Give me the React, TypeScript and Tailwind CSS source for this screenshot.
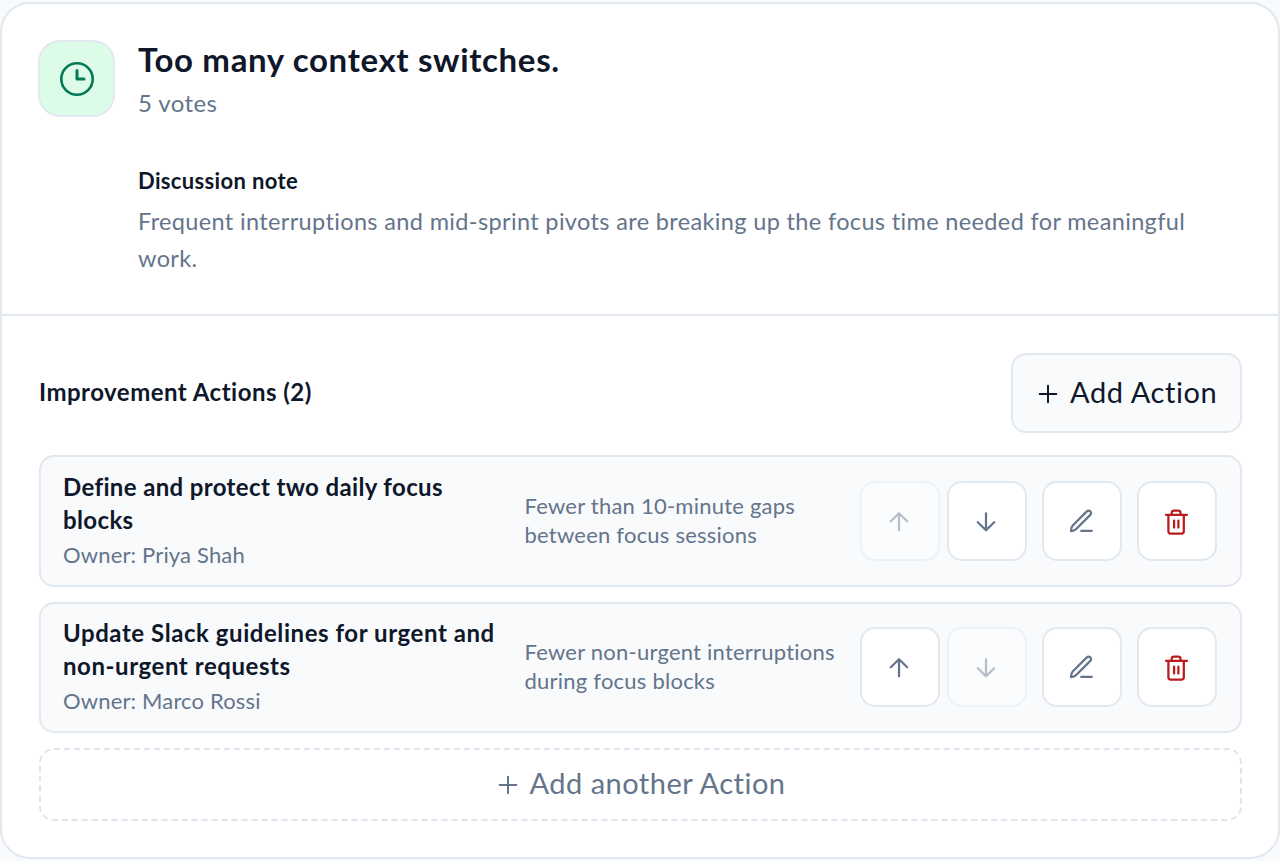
import type { ReactNode } from "react";

type Action = {
  title: [string, string];
  titleTracking: string;
  owner: string;
  outcome: [string, string];
  canMoveUp: boolean;
  canMoveDown: boolean;
};

const actions: Action[] = [
  {
    title: ["Define and protect two daily focus", "blocks"],
    titleTracking: "tracking-[0.36px]",
    owner: "Priya Shah",
    outcome: ["Fewer than 10-minute gaps", "between focus sessions"],
    canMoveUp: false,
    canMoveDown: true,
  },
  {
    title: ["Update Slack guidelines for urgent and", "non-urgent requests"],
    titleTracking: "tracking-[0.56px]",
    owner: "Marco Rossi",
    outcome: ["Fewer non-urgent interruptions", "during focus blocks"],
    canMoveUp: true,
    canMoveDown: false,
  },
];

function Icon({ children }: { children: ReactNode }) {
  return (
    <svg
      viewBox="0 0 30 30"
      className="size-[30px] shrink-0"
      fill="none"
      stroke="currentColor"
      strokeWidth={2.25}
      strokeLinecap="round"
      strokeLinejoin="round"
      aria-hidden="true"
    >
      {children}
    </svg>
  );
}

function ClockIcon() {
  return (
    <svg viewBox="0 0 40 40" className="size-10" fill="none" stroke="currentColor" strokeLinecap="round" strokeLinejoin="round" aria-hidden="true">
      <circle cx="20" cy="20" r="15.7" strokeWidth="2.6" />
      <path d="M20 11.4V20h7" strokeWidth="3" />
    </svg>
  );
}

function PlusIcon() {
  return (
    <svg viewBox="0 0 20 20" className="mt-px size-5 shrink-0" fill="none" stroke="currentColor" strokeWidth="2" strokeLinecap="round" aria-hidden="true">
      <path d="M10 1.700v16.600M1.700 10h16.600" />
    </svg>
  );
}

function IconButton({ label, disabled = false, danger = false, children }: { label: string; disabled?: boolean; danger?: boolean; children: ReactNode }) {
  return (
    <button
      type="button"
      aria-label={label}
      disabled={disabled}
      className={`flex size-20 shrink-0 items-center justify-center rounded-[15px] border-2 border-[#e2e8f0] bg-white disabled:opacity-45 ${danger ? "text-[#b91c1c]" : "text-[#64748b]"}`}
    >
      {children}
    </button>
  );
}

function ActionRow({ action }: { action: Action }) {
  return (
    <li className="flex h-[131.5px] items-center rounded-[15px] border-2 border-[#e2e8f0] bg-[#f8fafc] pr-[22px] pl-[22.5px]">
      <div className="w-[461.5px] shrink-0 pb-1 whitespace-nowrap">
        <h3 className={`text-[24px] leading-[33px] font-bold text-[#0f172a] ${action.titleTracking}`}>
          {action.title[0]}
          <br />
          {action.title[1]}
        </h3>
        <p className="mt-1 text-[22px] leading-[29px] tracking-[0.16px] text-[#64748b]">Owner: {action.owner}</p>
      </div>
      <p className="w-[335px] shrink-0 pb-[2px] text-[22px] leading-[29.3px] tracking-[0.23px] whitespace-nowrap text-[#64748b]">
        {action.outcome[0]}
        <br />
        {action.outcome[1]}
      </p>
      <div className="flex gap-[15px]">
        <div className="flex gap-[7.5px]">
          <IconButton label="Move up" disabled={!action.canMoveUp}>
            <Icon>
              <path d="M14 7.300v17M5.800 15.300l8.200-8 8.200 8" />
            </Icon>
          </IconButton>
          <IconButton label="Move down" disabled={!action.canMoveDown}>
            <Icon>
              <path d="M14 7.300v17M5.800 16.300l8.200 8 8.200-8" />
            </Icon>
          </IconButton>
        </div>
        <IconButton label="Edit">
          <Icon>
            <path d="M4 25.200c0-2.700.5-4.500 1.700-5.700L19.800 5.400c1.100-1 2.500-1 3.500 0s1 2.500 0 3.500L9.200 23c-1.200 1.300-2.700 2.100-5.200 2.200ZM14.200 24.800h10.600" />
          </Icon>
        </IconButton>
        <IconButton label="Delete" danger>
          <Icon>
            <path d="M4 8.800h21M9.700 8.800V6.800q0-2.300 2.300-2.300h4.200q2.300 0 2.300 2.300v2M6.400 8.800v16.400q0 2.300 2.300 2.300h10.800q2.300 0 2.300-2.300V8.800M12.100 14.600v7M16.400 14.600v7" />
          </Icon>
        </IconButton>
      </div>
    </li>
  );
}

export default function App() {
  return (
    <main className="h-[861px] w-[1280px] bg-[#f8fafc] pt-0.5 font-[Lato,'Noto_Sans',sans-serif]">
      <article className="h-[857px] overflow-hidden rounded-[30px] border-2 border-[#e2e8f0] bg-white">
        <header className="flex h-[312px] gap-[23px] border-b-2 border-[#e2e8f0] pt-8 pl-9">
          <div className="mt-1 flex size-[77px] shrink-0 items-center justify-center rounded-[22px] border-2 border-[#e2e8f0] bg-[#dcfce7] text-[#047857]">
            <ClockIcon />
          </div>
          <div className="pt-px whitespace-nowrap">
            <h1 className="text-[33px] leading-[44px] font-bold tracking-[0.65px] text-[#0f172a]">Too many context switches.</h1>
            <p className="mt-1 text-[24px] leading-9 tracking-[0.4px] text-[#64748b]">5 votes</p>
            <h2 className="mt-11 text-[22px] leading-8 font-bold tracking-[0.35px] text-[#0f172a]">Discussion note</h2>
            <p className="mt-[6px] text-[23.5px] leading-[36.6px] tracking-[0.355px] text-[#64748b]">
              Frequent interruptions and mid-sprint pivots are breaking up the focus time needed for meaningful
              <br />
              work.
            </p>
          </div>
        </header>
        <section className="px-[36.5px] pt-[37px]">
          <div className="flex h-20 items-center justify-between">
            <h2 className="pb-[2px] pl-[0.5px] text-[24px] leading-9 font-bold tracking-[0.48px] text-[#0f172a]">Improvement Actions (2)</h2>
            <button type="button" className="flex h-20 w-[230.5px] items-center gap-3 rounded-[15px] border-2 border-[#e2e8f0] bg-[#f8fafc] pl-[25px] whitespace-nowrap text-[#0f172a]">
              <PlusIcon />
              <span className="pb-[3px] text-[29px] leading-9 tracking-[0.6px]">Add Action</span>
            </button>
          </div>
          <ul className="mt-[22.4px] flex flex-col gap-[14.8px]">
            {actions.map((action) => (
              <ActionRow key={action.owner} action={action} />
            ))}
          </ul>
          <button type="button" className="mt-[14.8px] flex h-[73px] w-full items-center justify-center gap-3 rounded-[15px] border-2 border-dashed border-[#dde5ef] pl-[3px] whitespace-nowrap text-[#64748b]">
            <PlusIcon />
            <span className="pb-[3px] text-[29px] leading-9 tracking-[0.48px]">Add another Action</span>
          </button>
        </section>
      </article>
    </main>
  );
}
